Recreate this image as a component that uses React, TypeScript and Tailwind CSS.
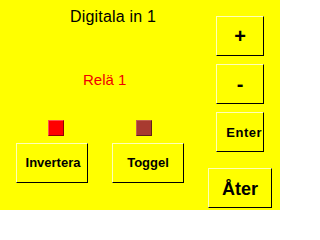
import React from 'react';

const btn =
  'flex items-center justify-center h-[40px] bg-[#ffff00] border-t border-l border-t-[#ffffb8] border-l-[#ffffb8] border-b border-r border-b-black border-r-black font-bold text-black';

export default function App() {
  return (
    <div
      className="w-[280px] h-[210px] bg-[#ffff00] flex overflow-hidden"
      style={{ fontFamily: '"Liberation Sans", Arial, sans-serif' }}
    >
      {/* Left panel */}
      <div className="w-[208px] flex flex-col pt-[8px]">
        <div className="pl-[70px] text-[16px] leading-[18px] tracking-[0.2px] text-black">Digitala in 1</div>
        <div className="pl-[83px] mt-[45px] text-[15px] leading-[17px] text-[#f00000]">Relä 1</div>

        <div className="flex mt-[32px]">
          <div className="ml-[48px] w-[16px] h-[16px] bg-[#ff0000] border border-t-[#ff5050] border-l-[#ff5050] border-b-[#900000] border-r-[#900000]" />
          <div className="ml-[72px] w-[16px] h-[16px] bg-[#a83a30] border border-t-[#c06050] border-l-[#c06050] border-b-[#602018] border-r-[#602018]" />
        </div>

        <div className="flex mt-[7px]">
          <button className={`${btn} ml-[16px] w-[72px] text-[13px] pl-[2px]`}>Invertera</button>
          <button className={`${btn} ml-[24px] w-[72px] text-[13px]`}>Toggel</button>
        </div>
      </div>

      {/* Right column */}
      <div className="flex flex-col pt-[16px]">
        <button className={`${btn} ml-[8px] w-[48px] text-[20px]`}>+</button>
        <button className={`${btn} ml-[8px] mt-[8px] w-[48px] text-[20px]`}>-</button>
        <button className={`${btn} ml-[8px] mt-[8px] w-[48px] text-[13px] tracking-[0.5px] justify-end pr-[1px] pt-[2px]`}>
          Enter
        </button>
        <button className={`${btn} mt-[16px] w-[64px] text-[18px] pt-[2px]`}>Åter</button>
      </div>
    </div>
  );
}
